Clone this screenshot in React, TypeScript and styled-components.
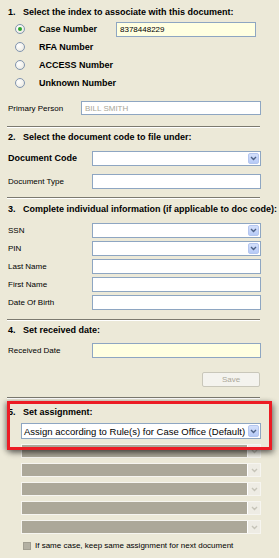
import React from "react";
import styled, { createGlobalStyle } from "styled-components";

const Global = createGlobalStyle`
  html, body { margin: 0; padding: 0; background: #ECE9D8; }
  body { font-family: "Liberation Sans", Arial, sans-serif; }
  * { box-sizing: border-box; }
`;

const Panel = styled.div`
  position: relative;
  width: 279px;
  height: 558px;
  padding: 4px 18px 0 8px;
  background: #ECE9D8;
  color: #000;
  overflow: hidden;
`;

const Title = styled.div<{ $mt?: number }>`
  height: 16px;
  display: flex;
  align-items: center;
  font-weight: bold;
  font-size: 9px;
  white-space: nowrap;
  overflow: visible;
  margin-top: ${(p) => p.$mt ?? 0}px;
`;

const Num = styled.span`
  display: inline-block;
  width: 15px;
  flex: none;
`;

const TitleText = styled.span`
  flex: none;
`;

const RadioRow = styled.div`
  height: 18px;
  display: flex;
  align-items: center;
`;

const Radio = styled.span<{ $checked?: boolean }>`
  width: 10px;
  height: 10px;
  margin-left: 7px;
  border-radius: 50%;
  border: 1px solid #8195B0;
  background: radial-gradient(circle at 35% 35%, #ffffff 0%, #f1f0ea 60%, #dcdad0 100%);
  display: flex;
  align-items: center;
  justify-content: center;
  flex: none;
  &::after {
    content: "";
    display: ${(p) => (p.$checked ? "block" : "none")};
    width: 4px;
    height: 4px;
    border-radius: 50%;
    background: #2CA52C;
  }
`;

const RadioLabel = styled.span`
  font-weight: bold;
  font-size: 9px;
  margin-left: 14px;
  width: 77px;
  flex: none;
  white-space: nowrap;
`;

const Row = styled.div<{ $mt?: number; $h?: number }>`
  height: ${(p) => p.$h ?? 18}px;
  display: flex;
  align-items: center;
  margin-top: ${(p) => p.$mt ?? 0}px;
`;

const Label = styled.span<{ $bold?: boolean; $w?: number }>`
  width: ${(p) => p.$w ?? 84}px;
  flex: none;
  font-size: ${(p) => (p.$bold ? 9 : 8)}px;
  font-weight: ${(p) => (p.$bold ? "bold" : "normal")};
  white-space: nowrap;
`;

const Field = styled.div<{ $yellow?: boolean; $w?: number; $h?: number; $muted?: boolean }>`
  height: ${(p) => p.$h ?? 15}px;
  ${(p) => (p.$w ? `width: ${p.$w}px; flex: none;` : "flex: 1;")}
  border: 1px solid #8EA6C2;
  background: ${(p) => (p.$yellow ? "#FFFFE1" : "#FFFFFF")};
  display: flex;
  align-items: center;
  padding-left: 3px;
  font-size: 8px;
  color: ${(p) => (p.$muted ? "#A8A697" : "#000")};
  white-space: nowrap;
  overflow: hidden;
`;

const Select = styled.div<{ $big?: boolean }>`
  flex: 1;
  height: ${(p) => (p.$big ? 16 : 15)}px;
  border: 1px solid #8EA6C2;
  background: #fff;
  display: flex;
  align-items: stretch;
  padding: 1px;
  font-size: 9.5px;
  white-space: nowrap;
`;

const SelectText = styled.span`
  flex: 1;
  display: flex;
  align-items: center;
  padding-left: 1px;
  overflow: hidden;
`;

const ArrowBtn = styled.span`
  width: 11px;
  flex: none;
  border-radius: 2px;
  border: 1px solid #B4C6EF;
  background: linear-gradient(#D4E0FB, #B6CAF6);
  display: flex;
  align-items: center;
  justify-content: center;
`;

const Chevron = ({ color }: { color: string }) => (
  <svg width="7" height="5" viewBox="0 0 7 5">
    <path d="M1 1 L3.5 3.5 L6 1" fill="none" stroke={color} strokeWidth="1.4" />
  </svg>
);

const Divider = styled.div<{ $mt: number }>`
  margin-top: ${(p) => p.$mt}px;
  margin-left: -1px;
  width: 253px;
  height: 2px;
  border-top: 1px solid #7C7A70;
  border-bottom: 1px solid #FFFFFF;
`;

const SaveRow = styled.div`
  margin-top: 13px;
  display: flex;
  justify-content: flex-end;
  padding-right: 1px;
`;

const SaveButton = styled.button`
  width: 58px;
  height: 15px;
  padding: 0;
  border: 1px solid #C9C7BA;
  border-radius: 2px;
  background: #F4F3EE;
  color: #ACA899;
  font-family: "Liberation Sans", Arial, sans-serif;
  font-size: 8px;
`;

const AssignArea = styled.div`
  margin-left: 13px;
`;

const DisabledSelect = styled.div<{ $mt: number }>`
  margin-top: ${(p) => p.$mt}px;
  height: 14px;
  border: 1px solid #F6F5F0;
  display: flex;
`;

const DisabledBar = styled.span`
  flex: 1;
  background: #ACA899;
`;

const DisabledArrow = styled.span`
  width: 13px;
  flex: none;
  background: #EEECE4;
  border-left: 1px solid #FFFFFF;
  display: flex;
  align-items: center;
  justify-content: center;
`;

const CheckRow = styled.div`
  margin-top: 4px;
  height: 15px;
  display: flex;
  align-items: center;
  font-size: 8px;
  white-space: nowrap;
`;

const CheckBox = styled.span`
  width: 8px;
  height: 8px;
  margin-left: 15px;
  margin-right: 4px;
  background: #B3B0A3;
  border: 1px solid #A19E91;
  flex: none;
`;

const Highlight = styled.div`
  position: absolute;
  left: 7px;
  top: 401px;
  width: 265px;
  height: 49px;
  border: 3px solid #EC1C24;
  box-shadow: 2px 3px 6px rgba(0, 0, 0, 0.45), -2px 1px 5px rgba(0, 0, 0, 0.3);
  pointer-events: none;
`;

const Group = styled.div<{ $mt: number }>`
  margin-top: ${(p) => p.$mt}px;
`;

const radios = [
  { label: "Case Number", checked: true },
  { label: "RFA Number" },
  { label: "ACCESS Number" },
  { label: "Unknown Number" },
];

const section3 = [
  { label: "SSN", select: true },
  { label: "PIN", select: true },
  { label: "Last Name" },
  { label: "First Name" },
  { label: "Date Of Birth" },
];

const DropDown = ({ big, text }: { big?: boolean; text?: string }) => (
  <Select $big={big}>
    <SelectText>{text}</SelectText>
    <ArrowBtn>
      <Chevron color="#4D6185" />
    </ArrowBtn>
  </Select>
);

export default function App() {
  return (
    <>
      <Global />
      <Panel>
        <Title>
          <Num>1.</Num>
          <TitleText>Select the index to associate with this document:</TitleText>
        </Title>
        {radios.map((r) => (
          <RadioRow key={r.label}>
            <Radio $checked={r.checked} />
            <RadioLabel>{r.label}</RadioLabel>
            {r.checked && (
              <Field $yellow $w={140} $h={15}>
                8378448229
              </Field>
            )}
          </RadioRow>
        ))}
        <Row $mt={8} $h={16}>
          <Label $w={73}>Primary Person</Label>
          <Field $h={14} $muted>
            BILL SMITH
          </Field>
        </Row>
        <Divider $mt={10} />

        <Title $mt={1}>
          <Num>2.</Num>
          <TitleText>Select the document code to file under:</TitleText>
        </Title>
        <Row $mt={4}>
          <Label $bold>Document Code</Label>
          <DropDown />
        </Row>
        <Row $mt={5}>
          <Label>Document Type</Label>
          <Field />
        </Row>
        <Divider $mt={7} />

        <Title $mt={2}>
          <Num>3.</Num>
          <TitleText>Complete individual information (if applicable to doc code):</TitleText>
        </Title>
        <Group $mt={4}>
          {section3.map((f) => (
            <Row key={f.label}>
              <Label>{f.label}</Label>
              {f.select ? <DropDown /> : <Field />}
            </Row>
          ))}
        </Group>
        <Divider $mt={8} />

        <Title $mt={1}>
          <Num>4.</Num>
          <TitleText>Set received date:</TitleText>
        </Title>
        <Row $mt={3}>
          <Label>Received Date</Label>
          <Field $yellow />
        </Row>
        <SaveRow>
          <SaveButton disabled>Save</SaveButton>
        </SaveRow>
        <Divider $mt={10} />

        <Title $mt={5}>
          <Num>5.</Num>
          <TitleText>Set assignment:</TitleText>
        </Title>
        <AssignArea>
          <Row $mt={3} $h={16}>
            <DropDown big text="Assign according to Rule(s) for Case Office (Default)" />
          </Row>
          {[0, 1, 2, 3, 4].map((i) => (
            <DisabledSelect key={i} $mt={5}>
              <DisabledBar />
              <DisabledArrow>
                <Chevron color="#C6C4B8" />
              </DisabledArrow>
            </DisabledSelect>
          ))}
        </AssignArea>
        <CheckRow>
          <CheckBox />
          If same case, keep same assignment for next document
        </CheckRow>
        <Highlight />
      </Panel>
    </>
  );
}
